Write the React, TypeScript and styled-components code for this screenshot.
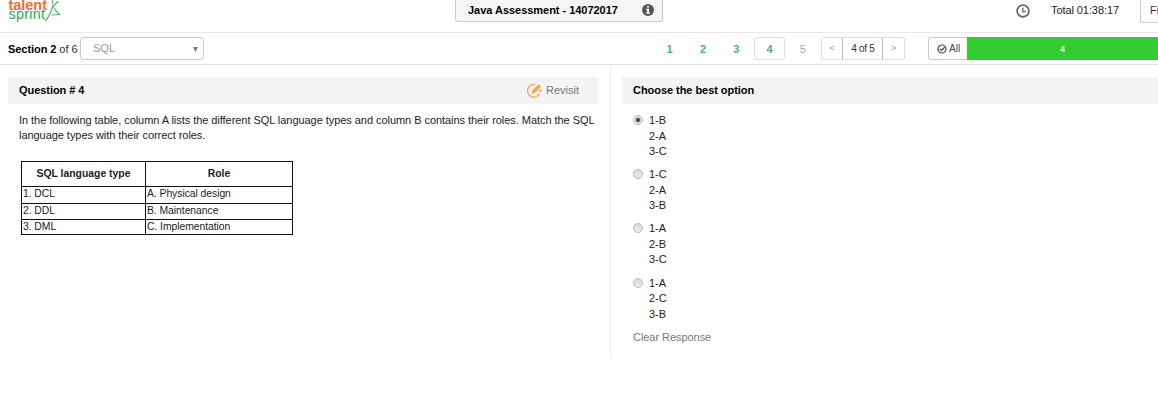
import React, { useState } from "react";
import styled, { createGlobalStyle } from "styled-components";

const GlobalStyle = createGlobalStyle`
  * { box-sizing: border-box; }
  body {
    margin: 0;
    background: #fff;
    color: #222;
    font: 11px/15.5px "Liberation Sans", Arial, sans-serif;
    overflow: hidden;
  }
`;

const Page = styled.div`
  width: 1158px;
  height: 403px;
  overflow: hidden;
`;

const Header = styled.header`
  display: flex;
  align-items: flex-start;
  height: 33px;
  border-bottom: 1px solid #e9e9e9;
`;

const Logo = styled.svg`
  flex: none;
  width: 62px;
  height: 26px;
`;

const TestTitle = styled.div`
  display: flex;
  align-items: center;
  flex: none;
  width: 208px;
  height: 22px;
  margin-left: 393px;
  padding: 0 8px 0 12px;
  border: 1px solid #ccc;
  border-top: 0;
  border-radius: 0 0 3px 3px;
  background: #f5f5f5;
  color: #000;
  font-weight: bold;
  white-space: nowrap;
  letter-spacing: -0.03px;
  svg { margin: 0 0 2px auto; }
`;

const Timer = styled.div`
  display: flex;
  align-items: center;
  height: 21px;
  margin-left: 353px;
  white-space: nowrap;
  letter-spacing: -0.08px;
  svg { margin-right: 21px; }
`;

const FinishButton = styled.button`
  flex: none;
  width: 60px;
  height: 23px;
  margin-left: auto;
  margin-right: -42px;
  padding: 0 0 1px 9px;
  border: 1px solid #ccc;
  border-top: 0;
  border-radius: 0 0 3px 3px;
  background: #fff;
  color: #333;
  font: inherit;
  text-align: left;
`;

const Toolbar = styled.nav`
  display: flex;
  align-items: center;
  height: 32px;
  padding-left: 8px;
  border-bottom: 1px solid #ddd;
`;

const SectionLabel = styled.div`
  flex: none;
  width: 72px;
  padding-top: 2px;
  color: #333;
  white-space: nowrap;
  letter-spacing: -0.06px;
  b { color: #000; }
`;

const SectionPicker = styled.div`
  display: flex;
  align-items: center;
  justify-content: space-between;
  flex: none;
  width: 124px;
  height: 23px;
  padding: 1px 5px 0 12px;
  border: 1px solid #ccc;
  border-radius: 3px;
  color: #999;
`;

const Pager = styled.div`
  display: flex;
  gap: 2px;
  margin-left: 450px;
`;

const PageNumber = styled.button<{ $active?: boolean; $muted?: boolean }>`
  width: 31.3px;
  height: 23px;
  padding: 2px 0 0;
  border: 1px solid ${(p) => (p.$active ? "#ddd" : "transparent")};
  border-radius: 3px;
  background: #fff;
  color: ${(p) => (p.$muted ? "#aaa" : "#3cb878")};
  font: inherit;
  font-weight: ${(p) => (p.$muted ? "normal" : "bold")};
`;

const Stepper = styled.div`
  display: flex;
  flex: none;
  width: 84px;
  height: 23px;
  margin-left: 2.5px;
  border: 1px solid #ddd;
  border-radius: 2px;
`;

const StepCell = styled.div<{ $current?: boolean }>`
  display: flex;
  align-items: center;
  justify-content: center;
  flex: ${(p) => (p.$current ? "0 0 41px" : "1")};
  border: solid #bbb;
  border-width: ${(p) => (p.$current ? "0 1px" : "0")};
  color: ${(p) => (p.$current ? "#333" : "#999")};
  font-size: ${(p) => (p.$current ? "10px" : "9px")};
  letter-spacing: ${(p) => (p.$current ? "-0.3px" : "0")};
  white-space: nowrap;
`;

const FilterAll = styled.button`
  display: flex;
  align-items: center;
  flex: none;
  gap: 2px;
  width: 39px;
  height: 23px;
  margin-left: 23px;
  padding: 0 0 0 8px;
  border: 1px solid #ccc;
  border-right: 0;
  border-radius: 3px 0 0 3px;
  background: #fff;
  color: #444;
  font: inherit;
  font-size: 10px;
`;

const AnsweredBar = styled.div`
  flex: 1;
  height: 23px;
  background: #3c3;
  color: #d4f7c8;
  font-size: 9px;
  font-weight: bold;
  line-height: 24px;
  text-align: center;
`;

const Body = styled.main`
  display: flex;
  height: 294px;
`;

const QuestionPane = styled.section`
  flex: none;
  width: 611px;
  padding: 12px 12px 0 8px;
  border-right: 1px solid #eee;
`;

const AnswerPane = styled.section`
  flex: 1;
  padding: 12px 0 0 11px;
`;

const PaneHeader = styled.div`
  display: flex;
  align-items: center;
  justify-content: space-between;
  height: 27px;
  padding: 0 19px 0 11px;
  background: #f4f4f4;
`;

const PaneTitle = styled.h2`
  margin: 0;
  padding-top: 1px;
  color: #000;
  font-size: 11px;
  letter-spacing: -0.05px;
`;

const Revisit = styled.button`
  display: flex;
  align-items: center;
  gap: 3px;
  padding: 0;
  border: 0;
  background: none;
  color: #777;
  font: inherit;
`;

const QuestionText = styled.p`
  margin: 9px 0 0 11px;
  line-height: 15px;
  white-space: nowrap;
  letter-spacing: -0.05px;
`;

const RoleTable = styled.table`
  width: 272px;
  margin: 18px 0 0 13px;
  border-collapse: collapse;
  table-layout: fixed;
  font-size: 10.4px;
  line-height: 12px;
  th, td {
    height: 16px;
    padding: 0 0 2px 1px;
    border: 1px solid #111;
    text-align: left;
  }
  td { letter-spacing: -0.06px; }
  tbody tr:first-child td { height: 17px; padding-bottom: 3px; }
  tbody tr:last-child td { height: 15px; padding-bottom: 1px; }
  th {
    height: 25px;
    padding: 0 0 1px;
    text-align: center;
  }
  th:first-child { width: 124px; }
`;

const OptionList = styled.div`
  display: flex;
  flex-direction: column;
  gap: 7.7px;
  padding: 9px 0 0 11px;
`;

const Option = styled.label`
  display: flex;
  gap: 6px;
`;

const Radio = styled.span<{ $checked: boolean }>`
  flex: none;
  width: 10px;
  height: 10px;
  margin-top: 2px;
  border: 1px solid #b8b8b8;
  border-radius: 50%;
  background: ${(p) =>
    p.$checked
      ? "radial-gradient(circle, #444 0 1.5px, #e0e0e0 2.7px)"
      : "linear-gradient(#dadada, #ececec)"};
`;

const ClearResponse = styled.button`
  display: block;
  margin: 8px 0 0 11px;
  padding: 0;
  border: 0;
  background: none;
  color: #777;
  font: inherit;
  letter-spacing: -0.05px;
`;

const rows = [
  ["1. DCL", "A. Physical design"],
  ["2. DDL", "B. Maintenance"],
  ["3. DML", "C. Implementation"],
];

const options = [
  ["1-B", "2-A", "3-C"],
  ["1-C", "2-A", "3-B"],
  ["1-A", "2-B", "3-C"],
  ["1-A", "2-C", "3-B"],
];

const InfoIcon = () => (
  <svg width="12" height="12" viewBox="0 0 12 12">
    <circle cx="6" cy="6" r="6" fill="#555" />
    <path d="M5 2h2v1.6H5zM4.2 4.7H7v3.8h.9v1.2H4.2V8.5h.9V5.9h-.9z" fill="#fff" />
  </svg>
);

const ClockIcon = () => (
  <svg width="14" height="14" viewBox="0 0 14 14" fill="none" stroke="#666">
    <circle cx="7" cy="7" r="5.9" strokeWidth="1.7" />
    <path d="M6.8 3.6v3.9h2.8" strokeWidth="1.3" />
  </svg>
);

const CheckIcon = () => (
  <svg width="10" height="10" viewBox="0 0 10 10" fill="none" stroke="#444">
    <circle cx="5" cy="5" r="4" strokeWidth="1.2" />
    <path d="M3 4.9l1.5 1.5 3.2-3.2" strokeWidth="1.3" />
  </svg>
);

const RevisitIcon = () => (
  <svg width="17" height="16" viewBox="0 0 17 16" fill="none" stroke="#f9a94b">
    <path d="M9 1.6A6.3 6.3 0 1 0 13.4 10.8" strokeWidth="1.5" />
    <path d="M5.5 10.9l1.1-3.8 6-5.9 2.6 2.5-6 6z" fill="#f9a94b" stroke="none" />
    <path d="M13 8.2l3-1.2" strokeWidth="1.5" />
  </svg>
);

export default function App() {
  const [selected, setSelected] = useState(0);
  return (
    <Page>
      <GlobalStyle />
      <Header>
        <Logo viewBox="0 0 62 26" fontFamily="Liberation Sans, Arial, sans-serif">
          <text x="8.5" y="10" fontSize="14.5" fontWeight="bold" fill="#f26a32" textLength="38.5">talent</text>
          <text x="8.5" y="18.5" fontSize="14.5" fill="#2fa84f" textLength="36.5">sprint</text>
          <g fill="none" stroke="#4db36a" strokeWidth="1.2" strokeLinecap="round" strokeLinejoin="round">
            <path d="M45.5 20.5C49 17.5 51 12 53 5.5" />
            <path d="M58 1.5l-4.5 4.5M52.8 3.5l-.5-3" />
            <path d="M54 7.5c.5 3 3 4 5.5 7l-7.5.5" />
          </g>
        </Logo>
        <TestTitle>Java Assessment - 14072017<InfoIcon /></TestTitle>
        <Timer><ClockIcon />Total 01:38:17</Timer>
        <FinishButton>Finish</FinishButton>
      </Header>
      <Toolbar>
        <SectionLabel><b>Section 2</b> of 6</SectionLabel>
        <SectionPicker>
          SQL
          <svg width="5" height="5" viewBox="0 0 5 5"><path d="M0 0h5L2.5 5z" fill="#777" /></svg>
        </SectionPicker>
        <Pager>
          {[1, 2, 3, 4, 5].map((n) => (
            <PageNumber key={n} $active={n === 4} $muted={n === 5}>{n}</PageNumber>
          ))}
        </Pager>
        <Stepper>
          <StepCell>&lt;</StepCell>
          <StepCell $current>4 of 5</StepCell>
          <StepCell>&gt;</StepCell>
        </Stepper>
        <FilterAll><CheckIcon />All</FilterAll>
        <AnsweredBar>4</AnsweredBar>
      </Toolbar>
      <Body>
        <QuestionPane>
          <PaneHeader>
            <PaneTitle>Question # 4</PaneTitle>
            <Revisit><RevisitIcon />Revisit</Revisit>
          </PaneHeader>
          <QuestionText>
            In the following table, column A lists the different SQL language types and column B contains their roles. Match the SQL
            <br />
            language types with their correct roles.
          </QuestionText>
          <RoleTable>
            <thead>
              <tr><th>SQL language type</th><th>Role</th></tr>
            </thead>
            <tbody>
              {rows.map(([type, role]) => (
                <tr key={type}><td>{type}</td><td>{role}</td></tr>
              ))}
            </tbody>
          </RoleTable>
        </QuestionPane>
        <AnswerPane>
          <PaneHeader>
            <PaneTitle>Choose the best option</PaneTitle>
          </PaneHeader>
          <OptionList>
            {options.map((lines, i) => (
              <Option key={i} onClick={() => setSelected(i)}>
                <Radio $checked={i === selected} />
                <div>{lines.map((line) => <div key={line}>{line}</div>)}</div>
              </Option>
            ))}
          </OptionList>
          <ClearResponse>Clear Response</ClearResponse>
        </AnswerPane>
      </Body>
    </Page>
  );
}
